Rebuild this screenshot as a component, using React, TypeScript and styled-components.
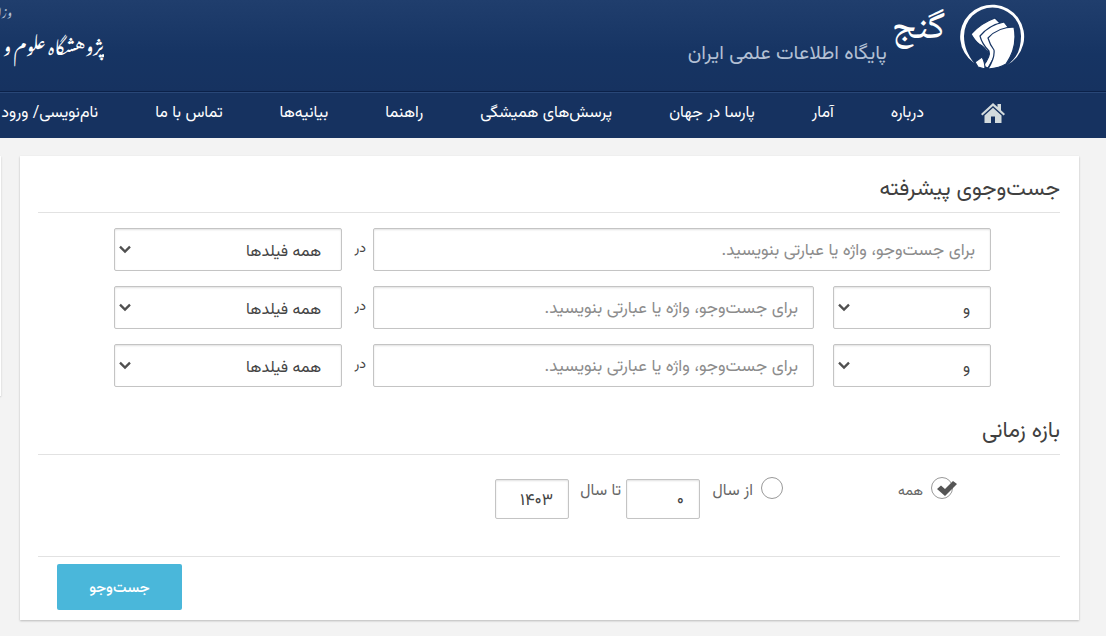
import React from "react";
import styled, { createGlobalStyle } from "styled-components";

const GlobalStyle = createGlobalStyle`
  * { box-sizing: border-box; }
  body {
    margin: 0;
    background: #f3f3f3;
    color: #444;
    font-family: Vazirmatn, "Noto Sans Arabic", "DejaVu Sans", sans-serif;
    font-size: 14px;
    line-height: 24px;
  }
  input, select, button { font-family: inherit; }
`;

const Page = styled.div`
  min-height: 100vh;
  overflow: hidden;
`;

const Header = styled.header`
  display: flex;
  justify-content: space-between;
  height: 92px;
  padding-right: 78px;
  background: linear-gradient(#203e6d, #163463 60%, #163260);
  border-bottom: 1px solid #0b2149;
  color: #fff;
`;

const Brand = styled.a`
  display: flex;
  align-items: flex-start;
  color: #fff;
  text-decoration: none;
  white-space: nowrap;
`;

const BrandMark = styled.svg`
  width: 68px;
  height: 72px;
`;

const BrandName = styled.span`
  margin-right: 15px;
  font-family: "Noto Naskh Arabic", Vazirmatn, "DejaVu Sans", serif;
  font-size: 38px;
  font-weight: 500;
  line-height: 60px;
`;

const BrandTagline = styled.span`
  margin-right: 5px;
  padding-top: 38px;
  font-size: 20px;
  line-height: 32px;
  color: #b3c0d4;
`;

const Institute = styled.div`
  display: flex;
  flex-direction: column;
  width: 104px;
  overflow: hidden;
  white-space: nowrap;
  font-family: "Noto Nastaliq Urdu", Vazirmatn, "DejaVu Sans", serif;
`;

const Ministry = styled.span`
  padding-right: 92px;
  font-size: 12px;
  line-height: 20px;
  color: #b3c0d4;
`;

const InstituteName = styled.span`
  font-size: 19px;
  line-height: 46px;
`;

const Nav = styled.nav`
  display: flex;
  gap: 57px;
  align-items: center;
  height: 46px;
  padding: 0 101px 4px 0;
  background: #163260;
  border-top: 1px solid #294777;
`;

const NavLink = styled.a`
  color: #fff;
  font-size: 16px;
  line-height: 26px;
  text-decoration: none;
  white-space: nowrap;
`;

const HomeIcon = styled.svg`
  display: block;
  width: 24px;
  height: 20px;
  margin-bottom: 2px;
`;

const Content = styled.div`
  display: grid;
  grid-template-columns: 1fr 1px;
  column-gap: 19px;
  align-items: start;
  padding: 18px 27px 15px 0;
`;

const Panel = styled.div`
  background: #fff;
  box-shadow: 0 1px 2px rgba(0, 0, 0, 0.24);
`;

const Card = styled(Panel)`
  padding: 14px 19px 10px 18px;
`;

const SidePanel = styled(Panel)`
  height: 240px;
`;

const Title = styled.h2`
  margin: 0;
  height: 43px;
  padding-top: 2px;
  border-bottom: 1px solid #e2e2e2;
  font-size: 22px;
  font-weight: 400;
  line-height: 36px;
  color: #404040;
`;

const Rows = styled.div`
  display: grid;
  row-gap: 15px;
  padding: 15px 69px 25px 76px;
`;

const Row = styled.div`
  display: flex;
  align-items: stretch;
  height: 43px;
`;

const TextBox = styled.input<{ $year?: boolean }>`
  flex: ${(p) => (p.$year ? "none" : "1")};
  width: ${(p) => (p.$year ? "74px" : "auto")};
  min-width: 0;
  padding: ${(p) => (p.$year ? "3px 15px 0" : "3px 15px 0 8px")};
  border: 1px solid #c4c4c4;
  border-radius: 2px;
  background: #fff;
  box-shadow: inset 0 1px 2px rgba(0, 0, 0, 0.12);
  color: #444;
  font-size: 17px;
  outline: none;
  &::placeholder { color: #8c8c8c; opacity: 1; }
`;

const SelectBox = styled.div<{ $wide?: boolean }>`
  position: relative;
  width: ${(p) => (p.$wide ? "228px" : "158px")};
  margin-left: ${(p) => (p.$wide ? "0" : "19px")};
`;

const Select = styled.select`
  appearance: none;
  display: block;
  width: 100%;
  height: 100%;
  padding: 5px 20px 0 28px;
  border: 1px solid #c4c4c4;
  border-radius: 2px;
  background: #fff;
  box-shadow: inset 0 1px 2px rgba(0, 0, 0, 0.12);
  color: #444;
  font-size: 16px;
`;

const Chevron = styled.svg`
  position: absolute;
  left: 5px;
  top: 17px;
  width: 12px;
  height: 9px;
  pointer-events: none;
`;

const InLabel = styled.label`
  width: 31px;
  padding-right: 7px;
  font-size: 14px;
  line-height: 42px;
`;

const Range = styled.div`
  display: flex;
  align-items: flex-start;
  height: 102px;
  padding: 21px 103px 0 0;
  border-bottom: 1px solid #e2e2e2;
`;

const Choice = styled.label<{ $all?: boolean }>`
  display: flex;
  align-items: flex-start;
  width: ${(p) => (p.$all ? "170px" : "87px")};
  color: #666;
  font-size: ${(p) => (p.$all ? "14px" : "16px")};
  line-height: 32px;
  white-space: nowrap;
`;

const RadioBox = styled.span`
  position: relative;
  display: block;
  width: 27px;
  height: 24px;
  margin-left: 7px;
`;

const Radio = styled.input`
  appearance: none;
  display: block;
  width: 22px;
  height: 22px;
  margin: 1px 4px 0 0;
  border: 1px solid #999;
  border-radius: 50%;
  background: #fff;
`;

const Tick = styled.svg`
  position: absolute;
  right: 0;
  top: 4px;
  width: 21px;
  height: 17px;
  pointer-events: none;
`;

const YearLabel = styled.label`
  width: 57px;
  padding-right: 5px;
  color: #666;
  font-size: 16px;
  line-height: 32px;
`;

const YearBox = styled.span`
  display: flex;
  height: 40px;
  margin-top: 3px;
`;

const Actions = styled.div`
  display: flex;
  justify-content: flex-end;
  padding: 7px 0 0 19px;
`;

const SearchButton = styled.button`
  width: 125px;
  height: 46px;
  padding: 2px 0 0;
  border: 0;
  border-radius: 2px;
  background: #4ab7da;
  color: #fff;
  font-size: 15px;
  font-weight: 500;
`;

const links = [
  "درباره",
  "آمار",
  "پارسا در جهان",
  "پرسش‌های همیشگی",
  "راهنما",
  "بیانیه‌ها",
  "تماس با ما",
  "نام‌نویسی/ ورود",
];

function Dropdown({ id, text, label, wide }: { id: string; text: string; label?: string; wide?: boolean }) {
  return (
    <SelectBox $wide={wide}>
      <Select id={id} aria-label={label}>
        <option>{text}</option>
      </Select>
      <Chevron viewBox="0 0 12 9" aria-hidden="true">
        <path d="M1 1.6L6 6.6L11 1.6" fill="none" stroke="#505050" strokeWidth="2.3" />
      </Chevron>
    </SelectBox>
  );
}

function SearchRow({ index }: { index: number }) {
  return (
    <Row>
      {index > 0 && <Dropdown id={`operator-${index}`} text="و" label="عملگر" />}
      <TextBox
        type="text"
        aria-label="عبارت جست‌وجو"
        placeholder="برای جست‌وجو، واژه یا عبارتی بنویسید."
      />
      <InLabel htmlFor={`field-${index}`}>در</InLabel>
      <Dropdown id={`field-${index}`} text="همه فیلدها" wide />
    </Row>
  );
}

export default function App() {
  return (
    <Page dir="rtl" lang="fa">
      <GlobalStyle />
      <Header>
        <Brand href="#">
          <BrandMark viewBox="0 0 68 72" aria-hidden="true">
            <path
              fill="#fff"
              fillRule="evenodd"
              d="M14 63A32 32 0 1 1 46 65.500C56 60 61 50 61 36A28 28 0 1 0 4 36C4 47 8 55 14 63Z"
            />
            <g fill="#fff" stroke="#163463" strokeWidth="1.2" strokeLinejoin="round">
              <path d="M11 34Q21 23 35 18L40 23L29 34L28 53Q25 47 19 44Q15 41 11 34Z" />
              <path d="M20 36Q29 25 44 22L48 27L36 36L37 52L28 68L23 66Q31 56 29 51Q22 44 20 36Z" />
              <path d="M28 38Q38 27 54 27Q58 47 46 64Q40 68 28 69Q35 58 34 50Q30 45 28 38Z" />
              <path d="M15 62L22 57Q25 62 25 69L18 67Z" />
            </g>
          </BrandMark>
          <BrandName>گنج</BrandName>
          <BrandTagline>پایگاه اطلاعات علمی ایران</BrandTagline>
        </Brand>
        <Institute>
          <Ministry>وزارت</Ministry>
          <InstituteName>پژوهشگاه علوم و</InstituteName>
        </Institute>
      </Header>
      <Nav>
        <NavLink href="#" aria-label="خانه">
          <HomeIcon viewBox="0 0 24 20" aria-hidden="true">
            <path
              fill="#d3dbdd"
              d="M12 0L16.500 4V1H20V7.200L24 11L22.600 12.500L12 3L1.400 12.500L0 11ZM12 4.800L20.500 12.400V20H14V13.500H10V20H3.500V12.400Z"
            />
          </HomeIcon>
        </NavLink>
        {links.map((text) => (
          <NavLink href="#" key={text}>
            {text}
          </NavLink>
        ))}
      </Nav>
      <Content>
        <Card as="main">
          <form onSubmit={(e) => e.preventDefault()}>
            <Title>جست‌وجوی پیشرفته</Title>
            <Rows>
              <SearchRow index={0} />
              <SearchRow index={1} />
              <SearchRow index={2} />
            </Rows>
            <Title>بازه زمانی</Title>
            <Range>
              <Choice $all>
                <RadioBox>
                  <Radio type="radio" name="range" defaultChecked />
                  <Tick viewBox="0 0 21 17" aria-hidden="true">
                    <path fill="#555" d="M1 9L5 5.500L9 9L17 1L21 4L9 16Z" />
                  </Tick>
                </RadioBox>
                همه
              </Choice>
              <Choice>
                <RadioBox>
                  <Radio type="radio" name="range" />
                </RadioBox>
                از سال
              </Choice>
              <YearBox>
                <TextBox $year type="text" aria-label="از سال" defaultValue="۰" />
              </YearBox>
              <YearLabel htmlFor="year-to">تا سال</YearLabel>
              <YearBox>
                <TextBox $year id="year-to" type="text" defaultValue="۱۴۰۳" />
              </YearBox>
            </Range>
            <Actions>
              <SearchButton type="submit">جست‌وجو</SearchButton>
            </Actions>
          </form>
        </Card>
        <SidePanel as="aside" />
      </Content>
    </Page>
  );
}
